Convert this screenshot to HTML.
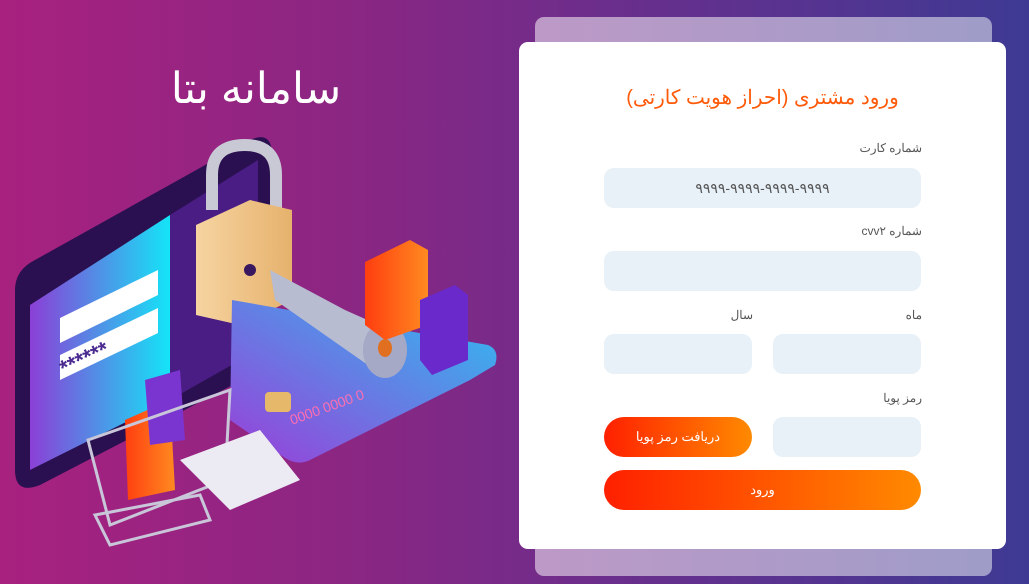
<!DOCTYPE html>
<html><head><meta charset="utf-8"><style>
*{margin:0;padding:0;box-sizing:border-box}
body{width:1029px;height:584px;overflow:hidden;background:linear-gradient(90deg,#a8217f 0%,#8a2683 35%,#6a2e8c 60%,#3e3a94 100%);font-family:"Liberation Sans","Noto Sans CJK SC",sans-serif;position:relative}
.back{position:absolute;left:535px;top:17px;width:457px;height:559px;border-radius:9px;background:linear-gradient(90deg,#bd99c7,#9f9cc8)}
.card{position:absolute;left:519px;top:42px;width:487px;height:507px;border-radius:9px;background:#fff}
.t{position:absolute;left:0;width:487px;top:43px;text-align:center;color:#ff5a0a;font-size:20px;direction:rtl}
.lbl{position:absolute;font-size:12px;color:#555;direction:rtl;text-align:right}
.in{position:absolute;background:#e8f0f8;border-radius:10px;height:40px}
.btn{position:absolute;height:40px;border-radius:20px;background:linear-gradient(90deg,#ff2000,#ff8a00);color:#fff;font-size:13px;text-align:center;line-height:40px;direction:rtl}
h1{position:absolute;left:130px;width:252px;top:64px;text-align:center;color:#fff;font-weight:normal;font-size:43px;direction:rtl}
</style></head><body>
<h1>سامانه بتا</h1>
<svg style="position:absolute;left:0;top:130px" width="520" height="440" viewBox="0 130 520 440">
<defs>
<linearGradient id="sc" x1="0" x2="1"><stop offset="0" stop-color="#8b3fd6"/><stop offset="1" stop-color="#14e4f7"/></linearGradient>
<linearGradient id="cd" x1="0" x2="1" y1="1" y2="0"><stop offset="0" stop-color="#9a3fd8"/><stop offset="1" stop-color="#2fbdf0"/></linearGradient>
<linearGradient id="lk" x1="0" x2="1"><stop offset="0" stop-color="#f6d4a0"/><stop offset="1" stop-color="#e6b26d"/></linearGradient>
<linearGradient id="bg1" x1="0" x2="1"><stop offset="0" stop-color="#ff3e10"/><stop offset="1" stop-color="#ff8a20"/></linearGradient>
</defs>
<path d="M15 290 Q15 270 35 260 L250 140 Q272 130 272 155 L272 345 Q272 365 252 375 L40 485 Q15 495 15 470Z" fill="#2a1050"/>
<path d="M30 305 L170 215 L170 400 L30 470Z" fill="url(#sc)"/>
<path d="M170 215 L258 160 L258 350 L170 400Z" fill="#4a1d85"/>
<path d="M60 318 L158 270 L158 295 L60 343Z" fill="#fff"/>
<path d="M60 355 L158 308 L158 333 L60 380Z" fill="#fff"/>
<text x="64" y="376" fill="#4a2a90" font-size="22" font-weight="bold" transform="rotate(-25 64 376)">******</text>
<path d="M212 210 L212 175 Q212 145 245 145 Q276 145 276 175 L276 215" fill="none" stroke="#c9c9d6" stroke-width="12"/>
<path d="M196 225 L250 200 L292 210 L292 300 L240 325 L196 315Z" fill="url(#lk)"/>
<circle cx="250" cy="270" r="6" fill="#3a1860"/>
<path d="M232 300 L488 345 Q500 350 495 365 L470 380 L310 460 Q298 466 285 458 L230 420Z" fill="url(#cd)"/>
<rect x="265" y="392" width="26" height="20" rx="4" fill="#e6b86a"/>
<text x="292" y="425" fill="#ff6fb0" font-size="14" transform="rotate(-20 292 425)">0000 0000 0</text>
<path d="M270 270 L345 310 L390 330 L395 360 L375 370 L275 300Z" fill="#b8bcd0"/>
<ellipse cx="385" cy="350" rx="22" ry="28" fill="#a6a9c6"/>
<ellipse cx="385" cy="348" rx="7" ry="9" fill="#e07020"/>
<path d="M365 262 L410 240 L428 250 L428 325 L385 340 L365 325Z" fill="url(#bg1)"/>
<path d="M420 300 L455 285 L468 295 L468 360 L432 375 L420 360Z" fill="#6a2acb"/>
<path d="M125 420 L170 400 L175 490 L128 500Z" fill="url(#bg1)"/>
<path d="M145 380 L180 370 L185 440 L150 445Z" fill="#7a35d0"/>
<path d="M88 440 L230 390 L225 480 L110 525Z" fill="none" stroke="#c8c6d8" stroke-width="3"/>
<path d="M95 515 L200 495 L210 520 L110 545Z" fill="none" stroke="#c8c6d8" stroke-width="3"/>
<path d="M180 460 L260 430 L300 480 L230 510Z" fill="#eceaf2"/>
</svg>
<div class="back"></div>
<div class="card">
<div class="t">ورود مشتری (احراز هویت کارتی)</div>
<div class="lbl" style="right:84px;top:99px">شماره کارت</div>
<div class="in" style="left:85px;top:126px;width:317px;text-align:center;line-height:40px;color:#555;font-size:14px">۹۹۹۹-۹۹۹۹-۹۹۹۹-۹۹۹۹</div>
<div class="lbl" style="right:84px;top:182px">شماره cvv۲</div>
<div class="in" style="left:85px;top:209px;width:317px"></div>
<div class="lbl" style="right:84px;top:266px">ماه</div>
<div class="lbl" style="right:253px;top:266px">سال</div>
<div class="in" style="left:85px;top:292px;width:148px"></div>
<div class="in" style="left:254px;top:292px;width:148px"></div>
<div class="lbl" style="right:84px;top:349px">رمز پویا</div>
<div class="btn" style="left:85px;top:375px;width:148px">دریافت رمز پویا</div>
<div class="in" style="left:254px;top:375px;width:148px"></div>
<div class="btn" style="left:85px;top:428px;width:317px">ورود</div>
</div>
</body></html>
